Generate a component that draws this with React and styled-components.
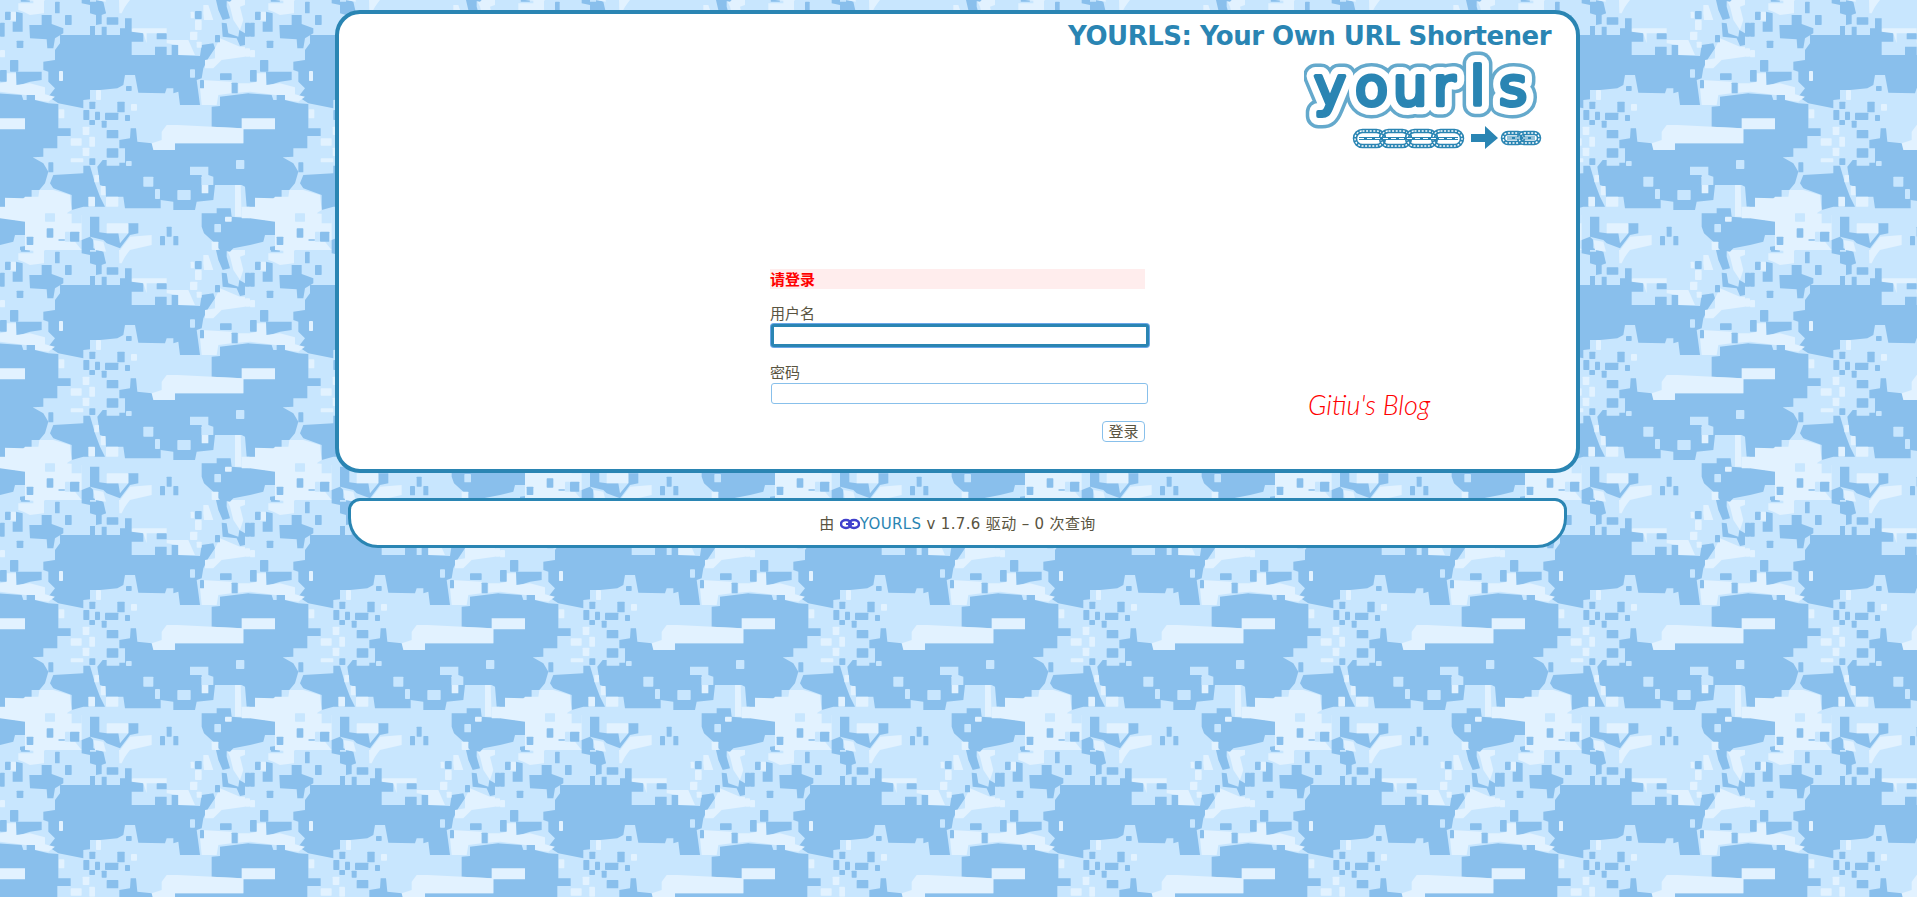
import React from 'react'
import styled, { createGlobalStyle } from 'styled-components'

// camo tile, coordinates are on a 750 grid, drawn at 250px
const DARK = [
  '180,105 270,105 270,78 285,78 285,105 305,105 305,80 320,80 320,105 360,105 360,85 375,85 375,55 395,55 395,85 430,100 430,125 395,125 395,165 465,165 465,140 500,140 500,165 515,165 515,135 535,135 535,165 600,168 605,135 640,130 645,145 625,175 610,205 605,235 590,240 600,315 540,315 535,275 520,280 520,265 500,265 495,280 415,278 405,225 375,225 370,255 352,265 300,270 270,270 270,298 250,300 250,325 175,310 145,290 165,265 145,245 145,215 130,210 130,185 165,180 165,150 180,130',
  '635,320 660,318 660,290 745,280 815,285 820,300 830,300 830,285 855,285 855,300 895,310 925,312 925,385 962,385 962,408 922,408 922,445 880,445 880,470 848,472 880,490 895,515 885,550 868,570 845,570 845,590 825,590 820,595 765,593 765,620 750,620 740,620 735,560 725,555 645,555 640,600 590,605 585,630 520,630 520,605 482,600 482,625 375,625 370,590 318,590 315,560 300,555 292,500 308,480 320,480 320,497 358,497 358,488 375,488 375,445 358,445 358,420 390,415 392,385 408,385 412,425 455,430 465,450 525,450 525,430 730,430 730,385 635,380',
  '160,525 250,520 250,497 270,497 285,550 300,590 315,620 250,620 215,630 215,585 160,565 150,550',
  '605,640 650,640 650,625 692,625 695,650 750,655 825,665 825,705 795,705 790,725 750,735 700,745 690,755 660,750 640,725 612,700 605,680',
  '125,45 155,45 155,72 190,85 190,100 165,115 160,145 142,145 140,118 90,115 88,75 125,75',
  '48,35 68,40 68,95 38,95 38,65 48,65',
  '245,0 270,0 270,5 300,5 318,40 305,45 305,72 288,75 288,45 270,40 270,15 245,10',
  '48,215 125,215 125,240 90,245 50,258',
  '648,0 680,0 680,20 690,55 668,60 655,30',
  '665,68 680,70 685,100 715,110 718,90 735,100 735,135 720,138 710,115 668,110',
  '270,650 298,650 298,697 320,700 355,700 360,730 385,700 385,670 415,670 415,700 390,705 360,745 320,730 310,720 270,710',
  '245,720 270,710 280,720 280,745 310,755 318,790 290,790 288,750 245,750',
  '60,740 100,735 90,750 60,750',
]
const DARK_RECTS = [
  [165, 5, 14, 35], [195, 45, 20, 30], [50, 122, 20, 22], [320, 52, 35, 22], [15, 35, 17, 25], [0, 68, 14, 42], [62, 0, 28, 5],
  [470, 100, 30, 18], [585, 33, 20, 24], [645, 105, 15, 22], [30, 180, 25, 35], [0, 210, 20, 35], [660, 220, 35, 20],
  [600, 240, 12, 25], [695, 248, 18, 32], [735, 68, 15, 42], [250, 255, 18, 15], [378, 258, 17, 15], [268, 305, 18, 22],
  [250, 330, 18, 30], [285, 335, 15, 25], [352, 305, 22, 32], [315, 338, 40, 22], [375, 345, 15, 18], [268, 360, 17, 15],
  [305, 362, 15, 21], [320, 390, 35, 25], [320, 445, 35, 28], [268, 475, 18, 20], [145, 487, 15, 30],
  [140, 685, 20, 28], [210, 695, 28, 30], [175, 718, 20, 4], [80, 710, 20, 25], [500, 680, 15, 30], [480, 708, 15, 28],
  [520, 708, 15, 28],
]
const BASE_POLYS = ['570,500 625,500 625,525 640,530 640,555 605,555 605,525 570,525']
const BASE_RECTS = [
  [430, 530, 30, 30], [465, 567, 15, 30], [532, 570, 40, 30], [708, 480, 25, 27], [643, 672, 20, 25], [570, 208, 15, 25],
  [135, 640, 30, 25], [195, 695, 15, 30], [215, 640, 30, 30], [378, 483, 17, 15],
]
const LIGHT = [
  '725,355 825,355 825,388 730,388 730,430 525,430 525,450 460,450 455,430 485,420 485,395 500,375 535,375 725,385',
  '0,620 15,620 15,593 75,593 75,570 95,570 95,590 115,590 118,570 160,570 210,585 215,630 200,640 245,645 245,720 225,725 245,750 135,750 130,755 75,750 75,705 45,705 45,660 0,660',
  '55,10 100,10 100,0 132,0 132,40 90,45 70,35 55,30',
  '357,0 385,0 365,40 358,40',
  '395,85 500,85 500,100 440,100 440,130 430,100 395,95',
  '500,120 565,120 585,165 535,165 535,135 500,130',
  '610,15 625,15 640,60 612,60 610,40',
  '680,0 735,0 735,15 720,20 730,60 720,90 700,60 690,20',
  '660,115 720,140 735,140 735,170 665,180 640,205 615,205 615,180 645,175 645,145',
  '605,240 695,245 695,280 655,285 650,315 605,315 600,265',
  '20,220 48,220 48,255 90,250 135,262 135,283 165,290 145,305 105,300 105,285 75,285 0,275 0,250 20,245',
  '715,250 750,250 750,275 715,278',
  '360,750 390,710 455,705 455,735 390,750 360,790',
  '280,720 310,725 318,755 285,750',
  '705,555 722,555 725,650 705,650',
]
const LIGHT_RECTS = [
  [30, 35, 18, 27], [570, 95, 22, 25], [585, 60, 20, 30], [572, 35, 10, 20], [590, 125, 15, 18], [735, 145, 15, 25], [0, 150, 15, 22],
  [177, 213, 12, 30], [288, 270, 15, 30], [175, 328, 18, 27], [393, 312, 18, 20], [0, 355, 75, 33], [212, 415, 33, 22],
  [268, 410, 17, 30], [248, 380, 20, 25], [248, 443, 20, 25], [212, 475, 38, 12], [605, 530, 20, 50], [283, 525, 14, 22],
  [302, 558, 15, 28], [318, 590, 37, 30], [265, 590, 20, 30], [320, 670, 65, 30], [675, 650, 20, 15], [635, 725, 20, 25],
  [725, 620, 25, 35],
]

const shapes = (polys, rects, color) =>
  polys.map((p) => `<polygon fill="${color}" points="${p}"/>`).join('') +
  rects.map(([x, y, w, h]) => `<rect fill="${color}" x="${x}" y="${y}" width="${w}" height="${h}" rx="2"/>`).join('')

const tileBody =
  shapes(DARK, [], '#89bfec') +
  shapes(LIGHT, LIGHT_RECTS, '#e2f2ff') +
  shapes(BASE_POLYS, BASE_RECTS, '#c8e6fe') +
  shapes([], DARK_RECTS, '#89bfec')

const tile = encodeURIComponent(
  `<svg xmlns="http://www.w3.org/2000/svg" width="250" height="250" viewBox="0 0 750 750"><rect width="750" height="750" fill="#c8e6fe"/>` +
    [[0, 0], [-750, 0], [0, -750], [-750, -750]].map(([x, y]) => `<g transform="translate(${x} ${y})">${tileBody}</g>`).join('') +
    `</svg>`
)

const GlobalStyle = createGlobalStyle`
  html, body { margin: 0; padding: 0; min-height: 100%; }
  body {
    min-height: 897px;
    background: #c8e6fe url("data:image/svg+xml,${tile}") repeat;
    color: #595441;
    font-family: "DejaVu Sans", Verdana, "Noto Sans CJK SC", sans-serif;
    font-size: 15px;
    overflow: hidden;
  }
`

const Page = styled.div`
  width: 1245px;
  margin: 0 auto;
  padding: 10px 2px 0 0;
`

const Card = styled.div`
  box-sizing: border-box;
  height: 463px;
  background: #fff;
  border: 4px solid #2a85b3;
  border-radius: 25px;
  padding: 8px 25px 0 0;
`

const Header = styled.header`
  display: flex;
  flex-direction: column;
  align-items: flex-end;
`

const Title = styled.h1`
  margin: 0;
  font-size: 26px;
  line-height: 28px;
  font-weight: bold;
  color: #2a85b3;
  letter-spacing: -0.5px;
`

const LogoSvg = styled.svg`
  display: block;
  width: 240px;
  height: 104px;
  margin-right: 7px;
`

const Body = styled.div`
  display: flex;
  align-items: flex-start;
  padding: 115px 0 0 431px;
`

const Form = styled.form`
  width: 380px;
  display: flex;
  flex-direction: column;
`

const ErrorBar = styled.div`
  width: 375px;
  height: 20px;
  line-height: 20px;
  background: #ffeded;
  color: #f00;
  font-weight: bold;
  font-size: 15px;
  font-family: "Noto Sans CJK SC", sans-serif;
`

const Label = styled.label`
  display: block;
  margin-top: 17px;
  height: 17px;
  line-height: 14px;
  font-size: 15px;
  font-family: "Noto Sans CJK SC", sans-serif;
`

const Input = styled.input`
  display: block;
  box-sizing: border-box;
  outline: none;
  background: #fff;
  width: ${(p) => (p.$focus ? 378 : 377)}px;
  height: ${(p) => (p.$focus ? 23 : 21)}px;
  margin: 1px;
  margin-bottom: ${(p) => (p.$focus ? 1 : 0)}px;
  border: ${(p) => (p.$focus ? '3px solid #2a85b3' : '1px solid #88c0eb')};
  border-radius: 3px;
  box-shadow: ${(p) => (p.$focus ? '0 0 0 1px #6aa6e8' : 'none')};
`

const ButtonRow = styled.div`
  display: flex;
  justify-content: flex-end;
  width: 375px;
  margin-top: 17px;
`

const Button = styled.button`
  box-sizing: border-box;
  width: 43px;
  height: 21px;
  padding: 0 0 2px;
  background: #fff;
  border: 1px solid #88c0eb;
  border-radius: 4px;
  color: #595441;
  font-size: 15px;
  line-height: 16px;
  font-family: "Noto Sans CJK SC", sans-serif;
`

const Blog = styled.div`
  margin: 121px 0 0 158px;
  font-family: "Lato", "Noto Sans", sans-serif;
  font-style: italic;
  font-weight: 300;
  font-size: 27px;
  line-height: 30px;
  color: #f00;
  white-space: nowrap;
`

const Footer = styled.footer`
  box-sizing: border-box;
  width: 1219px;
  height: 50px;
  margin: 25px 0 0 13px;
  padding-bottom: 2px;
  background: #fff;
  border: 3px solid #2a85b3;
  border-radius: 12px 12px 30px 30px;
  display: flex;
  align-items: center;
  justify-content: center;
  font-size: 15px;
  letter-spacing: 0.35px;
  white-space: pre;
`

const FooterLink = styled.a`
  color: #2a85b3;
  text-decoration: none;
`

const ChainIcon = styled.svg`
  width: 20px;
  height: 12px;
  vertical-align: -1px;
`

// one stretch of chain: oval links with a hatched rim and a bar joining them
const Chain = ({ x, y, count, w, h, step }) => (
  <g fill="none">
    {Array.from({ length: count }, (_, i) => (
      <g key={i}>
        <rect x={x + i * step} y={y} width={w} height={h} rx={h / 2} stroke="#2a85b3" strokeWidth="4.5" />
        <rect x={x + i * step} y={y} width={w} height={h} rx={h / 2} stroke="#fff" strokeWidth="1.4" strokeDasharray="2 1.6" />
      </g>
    ))}
    <line x1={x + 4} y1={y + h / 2} x2={x + (count - 1) * step + w - 4} y2={y + h / 2} stroke="#2a85b3" strokeWidth="3" />
    <line x1={x + 4} y1={y + h / 2} x2={x + (count - 1) * step + w - 4} y2={y + h / 2} stroke="#fff" strokeWidth="1" strokeDasharray="5 3" />
  </g>
)

const Logo = () => {
  // letters are spread out one by one, the halo comes from the wider strokes behind
  const word = {
    x: '10 51 89 129 166 195',
    y: 55,
    fontFamily: 'DejaVu Sans',
    fontSize: 54,
    strokeLinejoin: 'round',
  }
  return (
    <LogoSvg viewBox="0 0 240 104">
      <text {...word} fill="#64a9cc" stroke="#64a9cc" strokeWidth="25">yourls</text>
      <text {...word} fill="#fff" stroke="#fff" strokeWidth="18">yourls</text>
      <text {...word} fill="#2a85b3" stroke="#2a85b3" strokeWidth="4">yourls</text>
      <Chain x={51} y={81} count={4} w={29} h={15} step={26} />
      <polygon points="167,84 181,84 181,76 194,88 181,99 181,92 167,92" fill="#2a85b3" />
      <Chain x={199} y={83} count={2} w={20} h={10} step={16} />
    </LogoSvg>
  )
}

const App = () => (
  <>
    <GlobalStyle />
    <Page>
      <Card>
        <Header>
          <Title>YOURLS: Your Own URL Shortener</Title>
          <Logo />
        </Header>
        <Body>
          <Form onSubmit={(e) => e.preventDefault()}>
            <ErrorBar>请登录</ErrorBar>
            <Label>用户名</Label>
            <Input type="text" $focus />
            <Label>密码</Label>
            <Input type="password" />
            <ButtonRow>
              <Button type="submit">登录</Button>
            </ButtonRow>
          </Form>
          <Blog>Gitiu's Blog</Blog>
        </Body>
      </Card>
      <Footer>
        <span>
          由{' '}
          <ChainIcon viewBox="0 0 20 12">
            <ellipse cx="6" cy="6" rx="5" ry="4" fill="none" stroke="#4040cc" strokeWidth="2.5" />
            <ellipse cx="14" cy="6" rx="5" ry="4" fill="none" stroke="#4040cc" strokeWidth="2.5" />
            <rect x="6" y="5" width="8" height="2" fill="#4040cc" />
          </ChainIcon>
          <FooterLink href="#">YOURLS</FooterLink> v 1.7.6 驱动 – 0 次查询
        </span>
      </Footer>
    </Page>
  </>
)

export default App
